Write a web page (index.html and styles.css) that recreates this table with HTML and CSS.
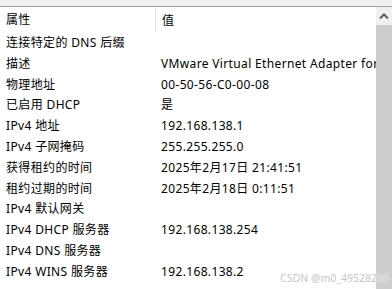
FILE: index.html
```html
<!DOCTYPE html>
<html lang="zh-CN">
<head>
    <meta charset="UTF-8">
    <link rel="stylesheet" href="styles.css">
    <title>网络连接详细信息</title>
</head>
<body>
    <div class="topbar"></div>
    <div class="frame">
        <div class="list">
            <div class="head">
                <div class="col-name">属性</div>
                <div class="col-value">值</div>
            </div>
            <div class="row"><div class="col-name">连接特定的 DNS 后缀</div><div class="col-value"></div></div>
            <div class="row"><div class="col-name">描述</div><div class="col-value">VMware Virtual Ethernet Adapter for VMnet8</div></div>
            <div class="row"><div class="col-name">物理地址</div><div class="col-value">00-50-56-C0-00-08</div></div>
            <div class="row"><div class="col-name">已启用 DHCP</div><div class="col-value">是</div></div>
            <div class="row"><div class="col-name">IPv4 地址</div><div class="col-value">192.168.138.1</div></div>
            <div class="row"><div class="col-name">IPv4 子网掩码</div><div class="col-value">255.255.255.0</div></div>
            <div class="row"><div class="col-name">获得租约的时间</div><div class="col-value">2025年2月17日 21:41:51</div></div>
            <div class="row"><div class="col-name">租约过期的时间</div><div class="col-value">2025年2月18日 0:11:51</div></div>
            <div class="row"><div class="col-name">IPv4 默认网关</div><div class="col-value"></div></div>
            <div class="row"><div class="col-name">IPv4 DHCP 服务器</div><div class="col-value">192.168.138.254</div></div>
            <div class="row"><div class="col-name">IPv4 DNS 服务器</div><div class="col-value"></div></div>
            <div class="row"><div class="col-name">IPv4 WINS 服务器</div><div class="col-value">192.168.138.2</div></div>
        </div>
        <div class="scrollbar">
            <div class="scroll-up">
                <svg width="10" height="6" viewBox="0 0 10 6">
                    <path d="M1 5.5 L5 1.5 L9 5.5" fill="none" stroke="#606060" stroke-width="2"/>
                </svg>
            </div>
            <div class="thumb"></div>
        </div>
    </div>
    <div class="watermark">CSDN @m0_49528260</div>
</body>
</html>
```

FILE: styles.css
```css
body {
    margin: 0;
    width: 392px;
    height: 289px;
    overflow: hidden;
    background: #ffffff;
    font-family: "Noto Sans", "Noto Sans CJK SC", sans-serif;
    font-size: 12px;
    letter-spacing: 0.35px;
    color: #000;
    position: relative;
}

.topbar {
    height: 6px;
    background: #f0f0f0;
    border-bottom: 1px solid #a0a0a0;
}

.frame {
    display: flex;
    height: 282px;
}

.list {
    flex: 1;
    overflow: hidden;
}

.head {
    display: flex;
    height: 25px;
    align-items: center;
}

.head .col-name {
    border-right: 1px solid #e5e5e5;
    height: 24px;
    line-height: 24px;
    margin-top: 1px;
}

.row {
    display: flex;
    height: 20.8px;
    line-height: 21.6px;
}

.col-name {
    width: 149px;
    padding-left: 6px;
    flex-shrink: 0;
    white-space: nowrap;
}

.col-value {
    padding-left: 6px;
    white-space: nowrap;
    overflow: hidden;
}

.scrollbar {
    width: 16px;
    display: flex;
    flex-direction: column;
}

.scroll-up {
    height: 18px;
    background: #f0f0f0;
    display: flex;
    align-items: center;
    justify-content: center;
}

.thumb {
    flex: 1;
    background: #cdcdcd;
}

.watermark {
    position: absolute;
    right: 3px;
    bottom: 4px;
    font-size: 10.5px;
    letter-spacing: 0;
    color: #c6c6c6;
    text-shadow: 0 0 1px #ffffff, 0 0 1px #ffffff;
    white-space: nowrap;
}
```
